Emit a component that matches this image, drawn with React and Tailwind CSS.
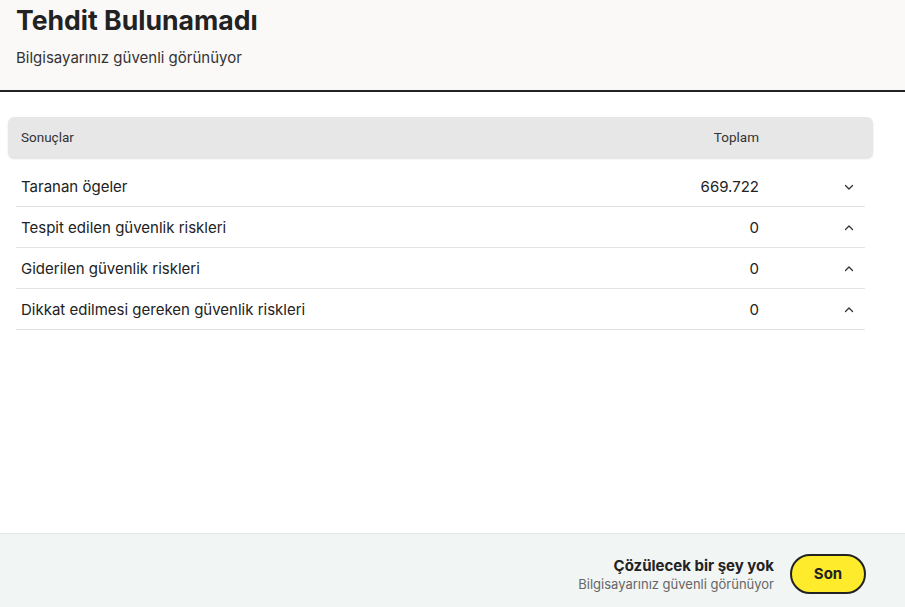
import React from "react";

const rows = [
  { label: "Taranan ögeler", value: "669.722", open: false },
  { label: "Tespit edilen güvenlik riskleri", value: "0", open: true },
  { label: "Giderilen güvenlik riskleri", value: "0", open: true },
  { label: "Dikkat edilmesi gereken güvenlik riskleri", value: "0", open: true },
];

function Chevron({ up }) {
  return (
    <svg width="12" height="12" viewBox="0 0 12 12" fill="none" stroke="#333" strokeWidth="1.3" strokeLinecap="round" strokeLinejoin="round">
      {up ? <path d="M2.5 7.5 6 4l3.5 3.5" /> : <path d="M2.5 4.5 6 8l3.5-3.5" />}
    </svg>
  );
}

export default function App() {
  return (
    <div className="w-[905px] h-[607px] flex flex-col bg-white text-[#222] font-['Inter',sans-serif] overflow-hidden">
      <header className="h-[92px] shrink-0 bg-[#faf9f8] border-b-2 border-[#222] px-4 pt-[4px]">
        <h1 className="text-[26.6px] leading-[32px] font-bold text-[#222]">Tehdit Bulunamadı</h1>
        <p className="mt-[12px] text-[15px] leading-[20px] text-[#333]">Bilgisayarınız güvenli görünüyor</p>
      </header>

      <main className="flex-1 pt-[25px] pl-[8px] pr-[32px]">
        <div className="h-[40px] flex items-center rounded-[6px] bg-[#e7e7e7] shadow-[0_2px_2px_rgba(0,0,0,0.12)] pl-[13px] text-[13.5px] text-[#333] font-['Roboto',sans-serif]">
          <span className="flex-1">Sonuçlar</span>
          <span className="w-[100px] text-right">Toplam</span>
          <span className="w-[114px]" />
        </div>
        <div className="mt-[9px] ml-[8px] mr-[8px]">
          {rows.map((r) => (
            <div key={r.label} className="h-[41px] flex items-center border-b border-[#e3e3e3] pl-[5px] pt-[2px] text-[15px] text-[#222]">
              <span className="flex-1">{r.label}</span>
              <span className="w-[100px] text-right">{r.value}</span>
              <span className="w-[106px] flex justify-end pr-[10px]">
                <Chevron up={r.open} />
              </span>
            </div>
          ))}
        </div>
      </main>

      <footer className="h-[74px] shrink-0 bg-[#f1f5f4] border-t border-[#e2e6e5] flex items-center justify-end pt-[7px] pr-[39px] gap-[16px]">
        <div className="text-right">
          <div className="text-[15px] leading-[20px] font-bold text-[#222]">Çözülecek bir şey yok</div>
          <div className="text-[13px] leading-[16px] text-[#666]">Bilgisayarınız güvenli görünüyor</div>
        </div>
        <button className="w-[76px] h-[40px] rounded-full bg-[#fdeb2c] border-2 border-[#222] text-[15px] font-bold text-[#222]">
          Son
        </button>
      </footer>
    </div>
  );
}
